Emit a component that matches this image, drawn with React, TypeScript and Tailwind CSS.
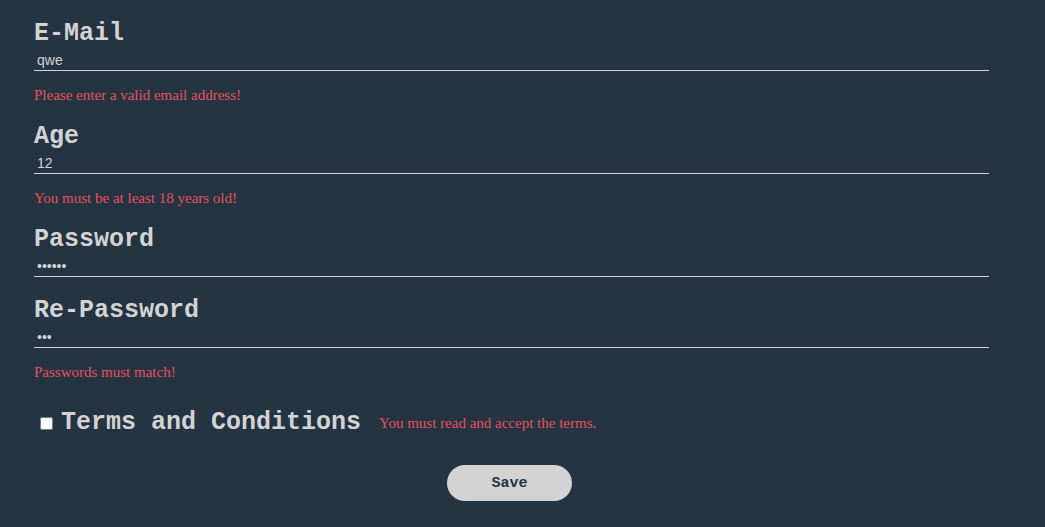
import React from "react";

const labelCls =
  "block text-[25px] leading-[30px] font-bold text-[#d3d3d3] [font-family:'Liberation_Mono','Courier_New',monospace]";
const inputCls =
  "block w-full h-[22px] bg-transparent border-0 border-b border-[#d3d3d3] px-[3px] text-[14px] text-[#d3d3d3] outline-none [font-family:'Liberation_Sans',Arial,sans-serif]";
const errCls =
  "text-[15px] leading-[17px] text-[#e8505b] [font-family:'Liberation_Serif','Times_New_Roman',serif]";

function Field({
  label,
  type,
  value,
  error,
  autoFocus,
}: {
  label: string;
  type: string;
  value: string;
  error?: string;
  autoFocus?: boolean;
}) {
  return (
    <div className={error ? "mb-[18px]" : "mb-[19px]"}>
      <label className={labelCls}>{label}</label>
      <input
        className={inputCls}
        type={type}
        defaultValue={value}
        autoFocus={autoFocus}
        readOnly={!autoFocus}
      />
      {error && <p className={`${errCls} mt-[16px]`}>{error}</p>}
    </div>
  );
}

export default function App() {
  return (
    <div className="min-h-[527px] w-full bg-[#243443] pt-[19px] overflow-hidden">
      <form className="ml-[34px] w-[955px]" onSubmit={(e) => e.preventDefault()}>
        <Field label="E-Mail" type="text" value="qwe" error="Please enter a valid email address!" />
        <Field label="Age" type="text" value="12" error="You must be at least 18 years old!" />
        <Field label="Password" type="password" value="123456" />
        <Field label="Re-Password" type="password" value="123" error="Passwords must match!" autoFocus />
        <div className="mt-[27px] flex items-center">
          <input
            type="checkbox"
            className="ml-[6px] mr-[8px] h-[13px] w-[13px] m-0"
          />
          <span className={labelCls}>Terms and Conditions</span>
          <span className={`${errCls} ml-[18px]`}>
            You must read and accept the terms.
          </span>
        </div>
        <div className="mt-[27px] flex justify-center">
          <button
            type="submit"
            className="ml-[-4px] h-[36px] w-[125px] rounded-full bg-[#d3d3d3] pt-[3px] text-[15px] font-bold text-[#243443] [font-family:'Liberation_Mono','Courier_New',monospace]"
          >
            Save
          </button>
        </div>
      </form>
    </div>
  );
}
